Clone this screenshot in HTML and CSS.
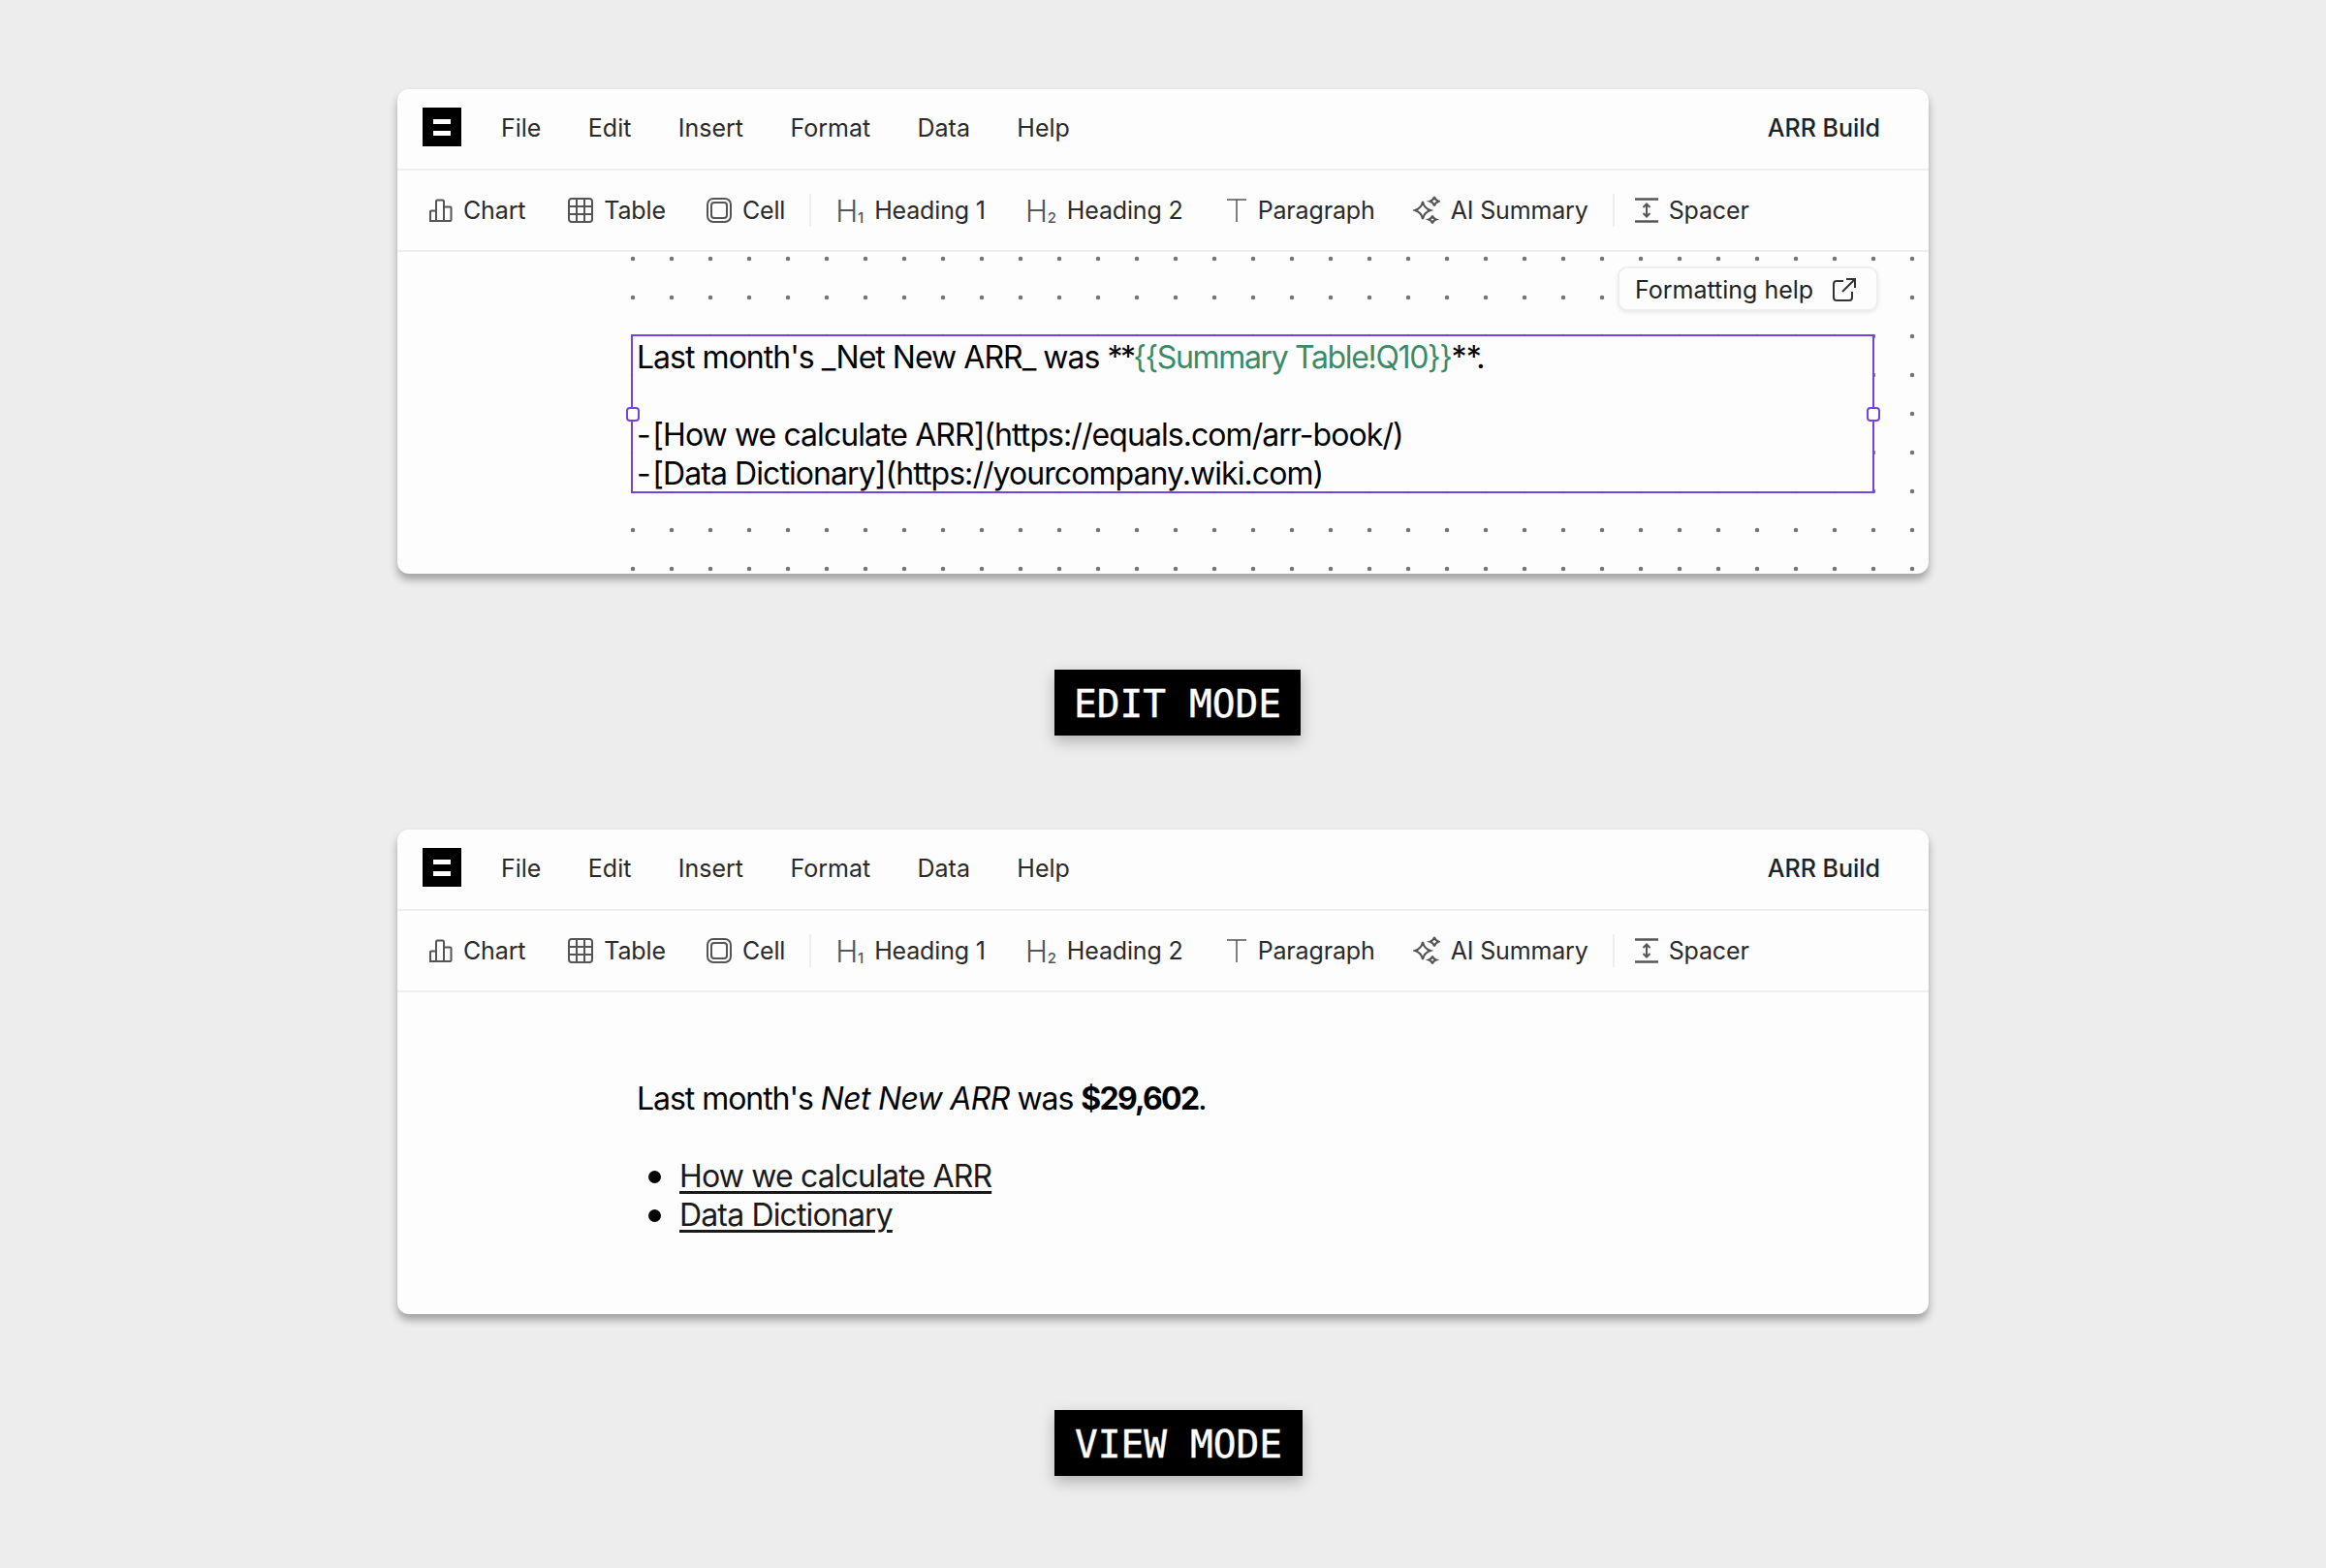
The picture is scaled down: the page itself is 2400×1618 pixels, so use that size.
FILE: index.html
```html
<!DOCTYPE html>
<html lang="en">
<head>
  <meta charset="UTF-8">
  <title>ARR Build</title>
  <link rel="stylesheet" href="styles.css">
</head>
<body>
  <main class="page">
    <section class="card">
      <div class="menubar">
        <div class="logo"><span></span><span></span></div>
        <nav class="menu">
          <span>File</span><span>Edit</span><span>Insert</span><span>Format</span><span>Data</span><span>Help</span>
        </nav>
        <div class="doc-title">ARR Build</div>
      </div>
      <div class="toolbar">
        <div class="tool"><svg class="ic" width="26" height="26" viewBox="0 0 26 26"><path d="M2 24V14.5a1 1 0 0 1 1-1h5V24zM8 24V4a1.5 1.5 0 0 1 1.5-1.5h5A1.5 1.5 0 0 1 16 4v20zM16 24V9.500h6.500a1 1 0 0 1 1 1V23a1 1 0 0 1-1 1z"/></svg>Chart</div>
        <div class="tool"><svg class="ic" width="26" height="26" viewBox="0 0 26 26"><rect x="1" y="1" width="24" height="24" rx="3"/><path d="M9 1v24M17 1v24M1 9h24M1 17h24"/></svg>Table</div>
        <div class="tool"><svg class="ic" width="26" height="26" viewBox="0 0 26 26"><rect x="1" y="1" width="24" height="24" rx="6"/><rect x="5" y="5" width="16" height="16" rx="3"/></svg>Cell</div>
        <div class="sep"></div>
        <div class="tool tool-h"><span class="ic-h">H<sub>1</sub></span>Heading 1</div>
        <div class="tool tool-h"><span class="ic-h">H<sub>2</sub></span>Heading 2</div>
        <div class="tool tool-t"><svg class="ic ic-t" width="22" height="26" viewBox="0 0 22 26"><path d="M1 2h20M11 2v23"/></svg>Paragraph</div>
        <div class="tool"><svg class="ic" width="28" height="30" viewBox="0 0 28 30"><path d="M10 6c1 5 3 7.500 8 9-5 1.500-7 4-8 9-1-5-3-7.500-8-9 5-1.500 7-4 8-9zM22 1c.6 2.500 1.800 3.900 4.500 4.700-2.700.8-3.900 2.200-4.500 4.700-.6-2.500-1.800-3.900-4.500-4.700 2.700-.8 3.900-2.200 4.500-4.700zM20 20.500c.5 2.200 1.500 3.300 3.800 4-2.300.7-3.300 1.800-3.800 4-.5-2.200-1.500-3.300-3.800-4 2.300-.7 3.300-1.800 3.800-4z"/></svg>AI Summary</div>
        <div class="sep sep-last"></div>
        <div class="tool"><svg class="ic" width="24" height="26" viewBox="0 0 24 26"><path d="M0 1.500h24M0 24.500h24" stroke-width="2.500"/><path d="M12 7v12M8.500 10 12 6.500l3.500 3.500M8.500 16l3.500 3.500 3.500-3.500" stroke-width="2"/></svg>Spacer</div>
      </div>
      <div class="canvas">
        <div class="dots">
          <div class="editor">
            <i class="handle handle-l"></i>
            <i class="handle handle-r"></i>
            <div>Last month's _Net New ARR_ was <span class="stars">**</span><span class="ref">{{Summary Table!Q10}}</span>**.</div>
            <div>&nbsp;</div>
            <div class="md-item"><span class="dash">- </span>[How we calculate ARR](https://equals.com/arr-book/)</div>
            <div class="md-item"><span class="dash">- </span>[Data Dictionary](https://yourcompany.wiki.com)</div>
          </div>
          <a class="help">Formatting help<svg width="26" height="26" viewBox="0 0 26 26"><path d="M12 4H5a3 3 0 0 0-3 3v14a3 3 0 0 0 3 3h13a3 3 0 0 0 3-3v-6M11 15 24 2M15 2h9v9"/></svg></a>
        </div>
      </div>
    </section>
    <div class="label">EDIT MODE</div>

    <section class="card">
      <div class="menubar">
        <div class="logo"><span></span><span></span></div>
        <nav class="menu">
          <span>File</span><span>Edit</span><span>Insert</span><span>Format</span><span>Data</span><span>Help</span>
        </nav>
        <div class="doc-title">ARR Build</div>
      </div>
      <div class="toolbar">
        <div class="tool"><svg class="ic" width="26" height="26" viewBox="0 0 26 26"><path d="M2 24V14.5a1 1 0 0 1 1-1h5V24zM8 24V4a1.5 1.5 0 0 1 1.5-1.5h5A1.5 1.5 0 0 1 16 4v20zM16 24V9.500h6.500a1 1 0 0 1 1 1V23a1 1 0 0 1-1 1z"/></svg>Chart</div>
        <div class="tool"><svg class="ic" width="26" height="26" viewBox="0 0 26 26"><rect x="1" y="1" width="24" height="24" rx="3"/><path d="M9 1v24M17 1v24M1 9h24M1 17h24"/></svg>Table</div>
        <div class="tool"><svg class="ic" width="26" height="26" viewBox="0 0 26 26"><rect x="1" y="1" width="24" height="24" rx="6"/><rect x="5" y="5" width="16" height="16" rx="3"/></svg>Cell</div>
        <div class="sep"></div>
        <div class="tool tool-h"><span class="ic-h">H<sub>1</sub></span>Heading 1</div>
        <div class="tool tool-h"><span class="ic-h">H<sub>2</sub></span>Heading 2</div>
        <div class="tool tool-t"><svg class="ic ic-t" width="22" height="26" viewBox="0 0 22 26"><path d="M1 2h20M11 2v23"/></svg>Paragraph</div>
        <div class="tool"><svg class="ic" width="28" height="30" viewBox="0 0 28 30"><path d="M10 6c1 5 3 7.500 8 9-5 1.500-7 4-8 9-1-5-3-7.500-8-9 5-1.500 7-4 8-9zM22 1c.6 2.500 1.800 3.900 4.500 4.700-2.700.8-3.900 2.200-4.500 4.700-.6-2.500-1.800-3.900-4.500-4.700 2.700-.8 3.900-2.200 4.500-4.700zM20 20.500c.5 2.200 1.500 3.300 3.800 4-2.300.7-3.300 1.800-3.800 4-.5-2.200-1.500-3.300-3.800-4 2.300-.7 3.300-1.800 3.800-4z"/></svg>AI Summary</div>
        <div class="sep sep-last"></div>
        <div class="tool"><svg class="ic" width="24" height="26" viewBox="0 0 24 26"><path d="M0 1.500h24M0 24.500h24" stroke-width="2.500"/><path d="M12 7v12M8.500 10 12 6.500l3.500 3.500M8.500 16l3.500 3.500 3.500-3.500" stroke-width="2"/></svg>Spacer</div>
      </div>
      <div class="view">
        <p>Last month's <em>Net New ARR</em> was <strong>$29,602</strong>.</p>
        <ul>
          <li><a>How we calculate ARR</a></li>
          <li><a>Data Dictionary</a></li>
        </ul>
      </div>
    </section>
    <div class="label label-view">VIEW MODE</div>
  </main>
</body>
</html>
```

FILE: styles.css
```css
* {
  margin: 0;
  padding: 0;
  box-sizing: border-box;
}

body {
  background: #ededed;
  font-family: Inter, 'Liberation Sans', sans-serif;
  color: #000;
}

.page {
  display: flex;
  flex-direction: column;
  align-items: center;
  padding-top: 92px;
  height: 1618px;
  overflow: hidden;
}

.card {
  width: 1580px;
  height: 500px;
  background: #fdfdfd;
  border-radius: 12px;
  box-shadow: 0 6px 9px rgba(0, 0, 0, 0.33);
  overflow: hidden;
  flex: none;
}

.menubar {
  display: flex;
  align-items: center;
  height: 84px;
  padding: 0 50px 2px 26px;
  border-bottom: 2px solid #eeeeee;
}

.logo {
  width: 40px;
  height: 40px;
  margin-top: -2px;
  background: #000;
  display: flex;
  flex-direction: column;
  align-items: center;
  justify-content: center;
  gap: 7px;
}

.logo span {
  width: 18px;
  height: 5px;
  background: #fff;
}

.menu {
  display: flex;
  gap: 48.4px;
  margin-left: 41px;
  font-size: 25px;
  color: #2a2a2a;
}

.doc-title {
  margin-left: auto;
  font-size: 25px;
  font-weight: 500;
  color: #222;
}

.toolbar {
  display: flex;
  align-items: center;
  height: 84px;
  padding-left: 32px;
  border-bottom: 2px solid #eeeeee;
  font-size: 25px;
  letter-spacing: -0.15px;
  color: #2a2a2a;
}

.tool {
  display: flex;
  align-items: center;
  gap: 11px;
  margin-right: 42px;
}

.tool:first-child {
  gap: 10px;
  margin-right: 44px;
}

.tool-h {
  margin-right: 41px;
}

.tool-t {
  margin-right: 39px;
}

.tool-t svg {
  margin-left: 3px;
}

.tool + .sep {
  margin-left: -17px;
}

.sep {
  width: 2px;
  height: 34px;
  background: #eeeeee;
  margin-right: 25px;
}

.sep-last {
  margin-right: 21px;
}

.ic {
  fill: none;
  stroke: #555;
  stroke-width: 2;
  flex: none;
}

.ic-t {
  stroke-width: 1.5;
}

.ic-h {
  font-size: 31px;
  font-weight: 300;
  line-height: 1;
  color: #555;
}

.ic-h sub {
  font-size: 15px;
  font-weight: 500;
  vertical-align: -1px;
  line-height: 0;
}

.canvas {
  height: 332px;
  padding-left: 223px;
}

.dots {
  position: relative;
  height: 100%;
  padding: 85px 0 0 18px;
  background-image: radial-gradient(circle at center, #777 2px, transparent 2.6px);
  background-size: 40px 40px;
  background-position: 0 -13px;
}

.editor {
  position: relative;
  width: 1283px;
  height: 164px;
  padding: 2px 4px 0;
  border: 2px solid #7342e0;
  background: #fdfdfd;
  font-size: 32px;
  line-height: 40px;
  letter-spacing: -0.97px;
}

.stars {
  letter-spacing: -2.7px;
}

.ref {
  color: #3b8a68;
  letter-spacing: -1.35px;
}

.md-item {
  letter-spacing: -0.93px;
}

.dash {
  letter-spacing: -3.7px;
}

.handle {
  position: absolute;
  top: 73px;
  width: 14px;
  height: 15px;
  border: 2px solid #7342e0;
  border-radius: 4px;
  background: #fff;
}

.handle-l {
  left: -7px;
}

.handle-r {
  right: -8px;
}

.help {
  position: absolute;
  top: 15px;
  left: 1036px;
  display: flex;
  align-items: center;
  gap: 19px;
  height: 46px;
  padding: 2px 20px 0 16px;
  border: 2px solid #eeeeee;
  border-radius: 10px;
  background: #fdfdfd;
  box-shadow: 0 2px 4px rgba(0, 0, 0, 0.08);
  font-size: 25px;
  color: #222;
}

.help svg {
  fill: none;
  stroke: #333;
  stroke-width: 2;
}

.label {
  flex: none;
  margin: 99px 0 97px 30px;
  padding: 0 20px;
  height: 68px;
  line-height: 70px;
  background: #000;
  color: #fff;
  font-family: 'DejaVu Sans Mono', monospace;
  font-size: 39.5px;
  -webkit-text-stroke: 0.4px #fff;
  box-shadow: 0 6px 14px rgba(0, 0, 0, 0.25);
}

.label-view {
  margin-left: 32px;
  padding: 0 21px;
}

.view {
  padding: 90px 0 0 247px;
  font-size: 32px;
  line-height: 40px;
  letter-spacing: -1.05px;
}

.view em {
  letter-spacing: -0.7px;
}

.view strong {
  letter-spacing: -1.75px;
}

.view ul {
  margin-top: 40px;
  padding-left: 12px;
  list-style: none;
  letter-spacing: -0.85px;
}

.view li {
  display: flex;
  align-items: center;
  gap: 19px;
}

.view li::before {
  content: '';
  width: 13px;
  height: 13px;
  border-radius: 50%;
  background: #000;
}

.view a {
  color: #1a1a1a;
  text-decoration: underline;
  text-decoration-thickness: 3px;
  text-underline-offset: 4px;
}
```
